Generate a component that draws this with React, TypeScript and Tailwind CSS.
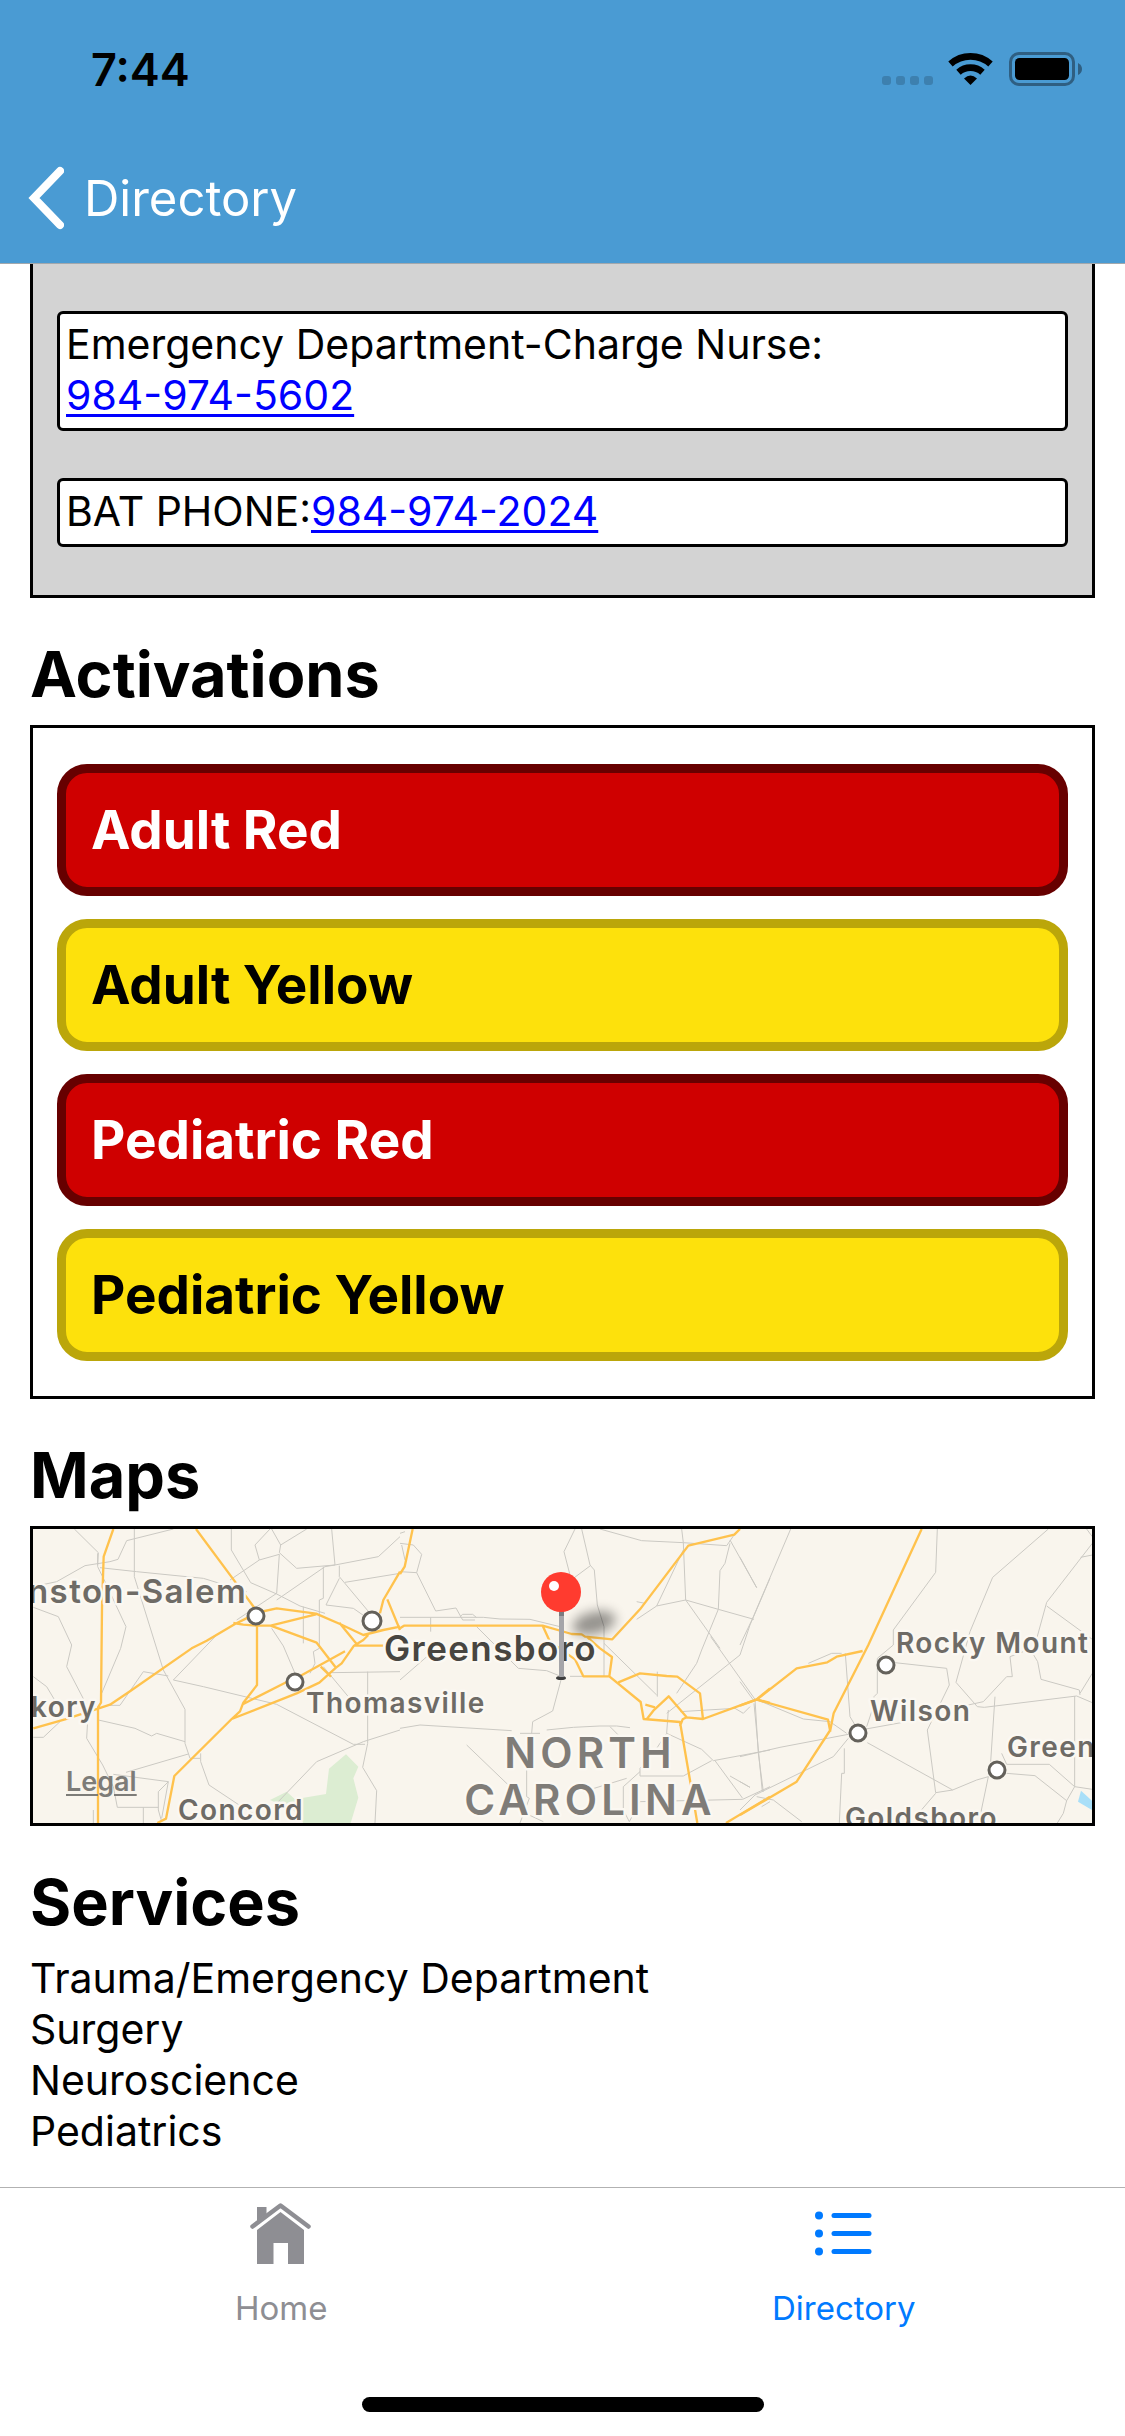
import type { ReactNode } from "react";

const activations = [
  { label: "Adult Red", tone: "red" },
  { label: "Adult Yellow", tone: "yellow" },
  { label: "Pediatric Red", tone: "red" },
  { label: "Pediatric Yellow", tone: "yellow" },
];

const tones: Record<string, string> = {
  red: "border-[#670000] bg-[#cf0000] text-white",
  yellow: "border-[#bba60a] bg-[#fde10c] text-black",
};

const services = ["Trauma/Emergency Department", "Surgery", "Neuroscience", "Pediatrics"];

function StatusBar() {
  return (
    <div className="flex h-[138px] items-center justify-between pl-[91px] pr-[43px]">
      <time className="text-[45px] font-semibold leading-none text-black">7:44</time>
      <svg className="h-[34px] w-[201px]" viewBox="0 0 201 34" aria-label="Wi-Fi on, battery full" role="img">
        <g fill="#3d80af">
          <rect x="1" y="24" width="9" height="9" rx="3" />
          <rect x="15" y="24" width="9" height="9" rx="3" />
          <rect x="29" y="24" width="9" height="9" rx="3" />
          <rect x="43" y="24" width="9" height="9" rx="3" />
        </g>
        <g fill="none" stroke="#000" strokeWidth="6.6">
          <path d="M69.500 12 A 30 30 0 0 1 109.500 12" />
          <path d="M77.500 20.200 A 18 18 0 0 1 101.500 20.200" />
        </g>
        <path d="M83 26.500 Q89.500 20.500 96 26.500 L89.500 33 Z" />
        <rect x="129.500" y="1.500" width="63" height="31" rx="8.500" fill="none" stroke="#2f5f82" strokeWidth="3" />
        <rect x="134" y="6" width="54" height="22" rx="4.500" />
        <path d="M197 11 Q201 13 201 17 Q201 21 197 23 Z" fill="#2f5f82" />
      </svg>
    </div>
  );
}

function PhoneCard({ children }: { children: ReactNode }) {
  return (
    <p className="rounded-md border-[3px] border-black bg-white px-[6px] pb-[7px] pt-[5px] text-[41px] leading-[51px]">
      {children}
    </p>
  );
}

function PhoneLink({ number }: { number: string }) {
  return (
    <a href={`tel:${number}`} className="text-[#0000ff] underline decoration-[3px] underline-offset-[4px]">
      {number}
    </a>
  );
}

function SectionTitle({ children }: { children: ReactNode }) {
  return <h2 className="mb-[13px] mt-[38px] text-[63px] font-bold leading-[76px]">{children}</h2>;
}

/* The road tiles are drawn at three units per pixel, side by side. */
function Roads() {
  return (
    <g transform="scale(0.33333)" fill="none" strokeLinejoin="round">
      <g transform="translate(-9 -27)">
        <path
          fill="#dcedd2"
          d="M720 840 L770 815 L795 838 L888 822 L897 746 L948 703 L985 740 L970 775 L985 833 L962 909 H820 L790 870Z"
        />
        <path
          stroke="#cbc9c3"
          strokeWidth="3"
          d="M133 27 L205 98 L203 135 M430 27 L290 62 L264 118 L240 125 L165 137 L80 185 L10 200 M203 100 V140 L225 185 L288 320 L272 385 L215 520 M210 143 L320 155 L520 175 L650 215 M313 27 V170 L400 450 L465 568 V670 L480 715 H510 M10 262 L85 290 L125 375 L110 440 L175 565 L170 655 L218 735 L250 800 L262 862 H385 M205 600 L315 625 L365 648 L380 640 L465 665 M240 556 H270 L340 455 L415 468 M430 480 L560 345 M430 480 L520 500 L740 553 L970 673 H1005 M288 757 L475 702 M250 763 L415 785 L395 895 M415 785 L385 815 V870 L395 905 M340 862 V909 M512 700 V725 L537 795 L650 870 L700 895 M604 27 V90 L662 188 L740 222 L810 258 L885 280 M725 27 L752 75 L830 27 M720 27 L675 75 L688 120 L748 103 L740 220 L620 300 M752 75 L748 98 L800 145 L915 135 L1045 110 L1110 50 M905 27 L915 135 L885 140 L740 240 M688 120 L600 180 M880 140 V235 L868 240 V385 L850 395 M928 137 V170 L1020 280 M928 175 L888 255 L970 265 L1020 300 M945 187 L1110 160 M725 325 L760 378 L795 460 M820 260 V370 M850 395 L855 430 L840 460 M905 458 L1110 455 M1013 455 V670 L998 742 L1040 812 L1035 909 M880 440 L980 560 M1110 630 L1000 665 L860 725 L740 850 M10 470 L50 500 L80 550 M10 652 H40 L90 605 M190 870 V909"
        />
        <path
          stroke="#ffc24d"
          strokeWidth="7"
          d="M250 27 L221 110 L216 260 L213 548 L204 562 V909 M10 625 L105 598 L204 566 L240 554 L300 514 L485 385 L530 362 L615 312 L655 292 M498 27 L615 185 L678 270 M610 309 L640 314 L680 317 H722 L858 283 M690 276 L740 265 L858 281 L930 312 L1000 345 L1060 330 L1110 320 M722 317 L860 368 L918 443 M681 317 V495 L640 548 L630 574 L605 597 L433 768 L408 896 L382 909 M605 597 L800 520 L868 488 L918 443 L935 430 L972 377 L1000 360 L1015 345 M640 552 L770 486 M812 467 L945 394 M928 308 L980 372 M872 440 L903 470 M972 377 H1060 M1110 155 L1060 240 L1050 280 M1072 238 L1110 330"
        />
      </g>
      <g transform="translate(1101 -27)">
        <path
          stroke="#cbc9c3"
          strokeWidth="3"
          d="M0 70 L40 75 L65 103 L50 158 L0 155 M0 40 L15 35 M5 75 L15 120 M50 158 L107 273 L168 264 L188 300 L225 300 M180 290 L188 283 H218 L230 293 M0 292 H250 L300 297 L390 298 L480 320 M92 292 V335 M92 400 L0 480 M230 320 L355 445 L440 452 L485 470 M525 27 L492 95 L510 165 M545 27 L570 135 L583 150 L592 255 L612 320 V469 H510 M570 138 L500 190 M600 27 L725 62 L850 68 L980 77 L1003 44 M845 27 L850 68 L857 240 L960 385 M857 240 L955 268 L1062 298 M857 240 L770 258 L710 298 M770 258 L850 90 M710 245 L735 250 M990 60 L1070 203 M990 70 L975 130 L960 152 L955 268 L905 390 L890 430 L830 520 M1110 175 L1050 315 L1020 405 L800 580 M932 350 L1065 538 L1075 700 L1090 815 M612 370 L770 525 M772 455 V530 M483 480 L458 573 L398 605 L395 640 M0 625 L60 615 L335 632 M360 640 H420 M440 630 L520 622 L600 618 H650 L690 623 M630 620 L655 645 M200 675 L325 795 M380 740 V830 L388 835 L360 909 M355 870 L430 905 M800 640 L905 688 L940 722 L1110 690 M805 570 L800 640 L760 700 L720 745 V768 H850 L935 722 M945 722 L1028 835 M720 755 L670 800 V870 L688 905 L720 845 L1028 838 L1110 800 M550 815 L680 775 M990 768 L1050 802 M840 575 L1005 565 L1030 580 L1050 560"
        />
        <path
          stroke="#ffc24d"
          strokeWidth="7"
          d="M38 27 L14 140 L0 162 M0 325 L12 317 H428 L515 342 L545 343 L555 350 L637 358 L720 268 L865 77 L1003 44 L1020 27 M428 317 L450 365 L525 418 L550 469 H628 L636 411 L600 385 L560 350 M628 469 L722 546 L731 597 L840 606 L892 909 M655 487 L720 460 L800 468 L832 470 L900 520 L909 597 L1070 538 L1110 505 M740 598 L760 572 L806 529 L860 592 L909 597 M860 592 L848 598 L840 618 M736 554 L765 562 M1070 538 L1110 549 M978 909 L1110 830"
        />
      </g>
      <g transform="translate(2121 -27)">
        <path
          stroke="#cbc9c3"
          strokeWidth="3"
          d="M152 27 L38 295 L0 375 M0 112 L50 203 M592 27 L587 157 L460 330 V375 L412 415 V520 L402 530 L400 560 L380 620 M925 27 L758 172 L690 335 L648 487 L712 560 L733 562 L1010 528 L1057 548 M685 555 L730 545 L800 470 H817 L810 410 L850 395 M1040 27 L1057 50 M1057 70 L920 247 L878 400 L893 425 L903 478 L1018 510 L1020 525 M920 258 L1057 358 M1022 112 L1057 105 M1057 460 L1020 520 M465 428 L620 445 L628 495 L562 630 L587 818 L638 810 L710 780 L745 770 M378 627 L500 605 M382 668 L638 810 M587 820 L540 875 M0 710 L120 682 L325 643 M325 655 L280 710 L45 825 L0 870 M316 400 L330 590 L345 615 M313 685 V760 H305 L298 909 M205 430 L275 400 H305 M50 539 L190 597 L270 605 L320 640 M42 550 L67 815 M0 485 L40 540 M1004 528 V800 L980 842 L885 767 L800 760 M800 733 H928 L1004 800 L1057 808 M980 842 L970 880 L952 909 M745 770 L720 890 M765 530 L752 725 M785 700 L800 733 M50 830 L100 840 L185 905 M0 785 L30 802 M65 860 L90 845"
        />
        <path fill="#a9dff8" d="M1023 812 L1060 846 V872 L1014 845Z" />
        <path
          stroke="#ffc24d"
          strokeWidth="7"
          d="M0 557 L50 539 L170 445 L262 427 L290 410 L368 393 M50 539 L264 599 L271 635 M545 27 L385 375 L281 580 L271 630 L170 785 L0 885"
        />
      </g>
    </g>
  );
}

const towns = [
  { x: 223, y: 87, r: 8 },
  { x: 339, y: 92, r: 9 },
  { x: 262, y: 153, r: 8 },
  { x: 853, y: 136, r: 8 },
  { x: 825, y: 204, r: 8 },
  { x: 964, y: 241, r: 8 },
];

function MapView() {
  return (
    <div className="relative h-[300px] overflow-hidden border-[3px] border-black bg-[#f9f5ed]">
      <svg
        className="block h-full w-full"
        viewBox="0 0 1059 294"
        preserveAspectRatio="xMidYMid slice"
        role="img"
        aria-label="Map of North Carolina"
      >
        <defs>
          <filter id="pinShadow" x="-50%" y="-100%" width="200%" height="300%">
            <feGaussianBlur stdDeviation="6" />
          </filter>
        </defs>
        <Roads />
        <g fill="#fff" stroke="#64615b" strokeWidth="3">
          {towns.map((t) => (
            <circle key={`${t.x}-${t.y}`} cx={t.x} cy={t.y} r={t.r} />
          ))}
        </g>
        <g
          className="text-[28px] font-semibold tracking-wider"
          fill="#6e6b66"
          stroke="#fbf8f2"
          strokeWidth="5"
          strokeLinejoin="round"
          paintOrder="stroke"
        >
          <text x="214" y="74" textAnchor="end" className="text-[33px]">Winston-Salem</text>
          <text x="64" y="188" textAnchor="end">Hickory</text>
          <text x="273" y="184">Thomasville</text>
          <text x="145" y="291">Concord</text>
          <text x="863" y="124">Rocky Mount</text>
          <text x="837" y="192">Wilson</text>
          <text x="974" y="228">Greenville</text>
          <text x="812" y="299">Goldsboro</text>
          <text x="351" y="132" className="text-[35px]" fill="#474540">Greensboro</text>
          <g className="text-[42px] tracking-widest" fill="#7f7c78" textAnchor="middle">
            <text x="557" y="239">NORTH</text>
            <text x="557" y="286">CAROLINA</text>
          </g>
        </g>
        <ellipse cx="561" cy="94" rx="22" ry="11" fill="#000" opacity="0.4" filter="url(#pinShadow)" transform="rotate(-14 561 94)" />
        <ellipse cx="528" cy="149" rx="5" ry="2" fill="#3c3c3c" />
        <rect x="526" y="80" width="5" height="68" rx="1" fill="#a5a5a9" />
        <rect x="526" y="80" width="5" height="7" fill="#7c7c80" />
        <circle cx="528" cy="63" r="20" fill="#ff3b2f" />
        <circle cx="521" cy="57" r="5" fill="#fff" />
      </svg>
      <a
        href="#legal"
        className="absolute bottom-6 left-[33px] text-[27px] font-semibold leading-[34px] text-[#7d7c78] underline decoration-2 underline-offset-[3px]"
      >
        Legal
      </a>
    </div>
  );
}

function HomeIcon() {
  return (
    <svg className="h-[62px] w-[62px]" viewBox="0 0 62 62" fill="currentColor" aria-hidden="true">
      <path d="M7 4 H16.500 V11 L7 18Z" />
      <path d="M2.500 23.500 L30.500 2.500 L58.500 23.500" fill="none" stroke="currentColor" strokeWidth="4.500" strokeLinecap="round" strokeLinejoin="round" />
      <path d="M30.500 9 L54 27 V61 H38 V40 H23.500 V61 H7 V27Z" />
    </svg>
  );
}

function ListIcon() {
  return (
    <svg className="h-[62px] w-[57px]" viewBox="0 0 57 62" fill="currentColor" aria-hidden="true">
      <circle cx="4" cy="12.500" r="4" />
      <circle cx="4" cy="30.500" r="4" />
      <circle cx="4" cy="48.500" r="4" />
      <rect x="16.500" y="10" width="40" height="5" rx="2.500" />
      <rect x="16.500" y="28" width="40" height="5" rx="2.500" />
      <rect x="16.500" y="46" width="40" height="5" rx="2.500" />
    </svg>
  );
}

function Tab({ label, color, children }: { label: string; color: string; children: ReactNode }) {
  return (
    <button type="button" className={`flex flex-1 flex-col items-center gap-[23px] pt-[15px] ${color}`}>
      {children}
      <span className="text-[33px] leading-[40px]">{label}</span>
    </button>
  );
}

export default function App() {
  return (
    <div className="flex min-h-screen flex-col bg-white font-['Inter',sans-serif] text-black">
      <header className="border-b border-[#a2a8ad] bg-[#4a9bd3] pb-[5px]">
        <StatusBar />
        <nav className="flex h-[120px] items-center pl-[28px]">
          <button type="button" className="flex items-center gap-5 text-white">
            <svg className="h-[66px] w-[36px]" viewBox="0 0 36 66" aria-hidden="true">
              <path d="M32 6 L6 33 L32 60" fill="none" stroke="currentColor" strokeWidth="8" strokeLinecap="round" strokeLinejoin="miter" />
            </svg>
            <span className="text-[49px] leading-none">Directory</span>
          </button>
        </nav>
      </header>

      <main className="flex-1 px-[30px]">
        <section className="flex flex-col gap-[47px] border-x-[3px] border-b-[3px] border-black bg-[#d3d3d3] px-6 pb-12 pt-[47px]">
          <PhoneCard>
            Emergency Department-Charge Nurse:
            <br />
            <PhoneLink number="984-974-5602" />
          </PhoneCard>
          <PhoneCard>
            BAT PHONE:
            <PhoneLink number="984-974-2024" />
          </PhoneCard>
        </section>

        <SectionTitle>Activations</SectionTitle>
        <section className="flex flex-col gap-[23px] border-[3px] border-black px-6 pb-[35px] pt-9">
          {activations.map((a) => (
            <button
              key={a.label}
              type="button"
              className={`h-[132px] rounded-[30px] border-[9px] px-[25px] text-left text-[53px] font-bold leading-none ${tones[a.tone]}`}
            >
              {a.label}
            </button>
          ))}
        </section>

        <SectionTitle>Maps</SectionTitle>
        <MapView />

        <SectionTitle>Services</SectionTitle>
        <ul className="text-[41px] leading-[51px]">
          {services.map((s) => (
            <li key={s}>{s}</li>
          ))}
        </ul>
      </main>

      <footer className="flex h-[249px] flex-col justify-between border-t border-[#b2b2b2] bg-white pb-6">
        <nav className="flex">
          <Tab label="Home" color="text-[#8e8e93]">
            <HomeIcon />
          </Tab>
          <Tab label="Directory" color="text-[#007aff]">
            <ListIcon />
          </Tab>
        </nav>
        <div className="h-[15px] w-[402px] self-center rounded-full bg-black" />
      </footer>
    </div>
  );
}
